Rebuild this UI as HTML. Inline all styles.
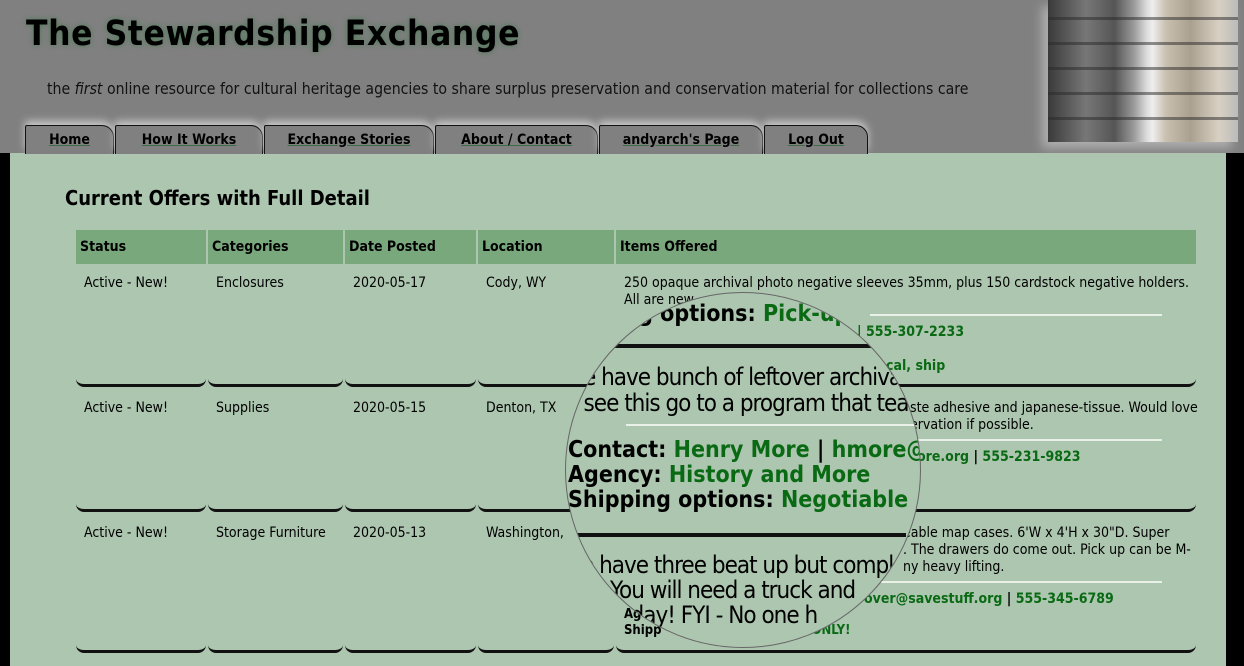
<!DOCTYPE html>
<html><head><meta charset="utf-8"><style>
*{margin:0;padding:0;box-sizing:border-box}
body{width:1244px;height:666px;overflow:hidden;background:#adc6b0;font-family:"DejaVu Sans Condensed","Liberation Sans",sans-serif;position:relative;color:#000}
#hdr{position:absolute;left:0;top:0;width:1244px;height:153px;background:#808080}
h1{position:absolute;left:26px;top:14px;font-size:35px;font-weight:bold;text-shadow:0 0 6px #4a7a55;letter-spacing:0.6px}
.tag{position:absolute;left:47px;top:79px;font-size:15.7px;color:#111}
.tab{position:absolute;top:125px;height:29px;background:#808080;border:1.5px solid #111;border-bottom:none;border-top-right-radius:12px;border-top-left-radius:2px;font-weight:bold;font-size:14px;text-align:center;padding-top:6px;box-shadow:0 -4px 8px #c8c8c8}
.tab span{text-decoration:underline;text-decoration-color:#3d6b45}
#img{position:absolute;left:1048px;top:0;width:190px;height:142px;background:
repeating-linear-gradient(0deg,rgba(0,0,0,0) 0 22px,rgba(40,40,40,.5) 22px 25px),
linear-gradient(90deg,#3a3a3a 0%,#777 20%,#555 35%,#999 45%,#dcdcdc 52%,#eee 55%,#c9c0b0 62%,#a9a090 75%,#d8d0c2 90%,#bbb 100%);box-shadow:-6px 6px 10px #b0b0b0}
.lb{position:absolute;left:0;top:153px;width:10px;height:513px;background:#000}
.rb{position:absolute;left:1226px;top:153px;width:18px;height:513px;background:#000}
h2{position:absolute;left:65px;top:186px;font-size:20px;font-weight:bold}
.th{position:absolute;top:230px;height:34px;background:#7aa87d;font-weight:bold;font-size:14px;padding:9px 0 0 4px}
.c{position:absolute;font-size:14px}
.bot{position:absolute;height:8px;border-bottom:3px solid #111;border-radius:0 0 8px 8px}
.g{color:#0a6a14;font-weight:bold}
.hl{position:absolute;left:870px;width:292px;height:2px;background:#e8f0e8}
#mag{position:absolute;left:565px;top:292px;width:356px;height:356px;border-radius:50%;overflow:hidden;border:1.5px solid #666;background:#adc6b0}
#mag div{position:absolute;white-space:nowrap}
.mb{font-size:23px;font-weight:bold}
.mn{font-size:24px;letter-spacing:-1px}
</style></head><body>
<div id="hdr"></div>
<h1>The Stewardship Exchange</h1>
<div class="tag">the <i>first</i> online resource for cultural heritage agencies to share surplus preservation and conservation material for collections care</div>
<div class="tab" style="left:25px;width:89px"><span>Home</span></div>
<div class="tab" style="left:115px;width:148px"><span>How It Works</span></div>
<div class="tab" style="left:264px;width:170px"><span>Exchange Stories</span></div>
<div class="tab" style="left:435px;width:163px"><span>About / Contact</span></div>
<div class="tab" style="left:599px;width:164px"><span>andyarch's Page</span></div>
<div class="tab" style="left:764px;width:104px"><span>Log Out</span></div>
<div id="img"></div>
<div class="lb"></div><div class="rb"></div>
<h2>Current Offers with Full Detail</h2>
<div class="th" style="left:76px;width:130px">Status</div>
<div class="th" style="left:208px;width:135px">Categories</div>
<div class="th" style="left:345px;width:131px">Date Posted</div>
<div class="th" style="left:478px;width:136px">Location</div>
<div class="th" style="left:616px;width:580px">Items Offered</div>

<div class="c" style="left:84px;top:275px">Active - New!</div>
<div class="c" style="left:216px;top:275px">Enclosures</div>
<div class="c" style="left:353px;top:275px">2020-05-17</div>
<div class="c" style="left:486px;top:275px">Cody, WY</div>
<div class="c" style="left:624px;top:275px;width:570px;line-height:17px">250 opaque archival photo negative sleeves 35mm, plus 150 cardstock negative holders. All are new</div>
<div class="hl" style="top:314px"></div>
<div class="c g" style="left:857px;top:324px">| <span>555-307-2233</span></div>
<div class="c g" style="left:886px;top:358px">cal, ship</div>

<div class="c" style="left:84px;top:400px">Active - New!</div>
<div class="c" style="left:216px;top:400px">Supplies</div>
<div class="c" style="left:353px;top:400px">2020-05-15</div>
<div class="c" style="left:486px;top:400px">Denton, TX</div>
<div class="c" style="left:910px;top:400px;line-height:17px">ste adhesive and japanese-tissue. Would love<br>ervation if possible.</div>
<div class="hl" style="top:439px"></div>
<div class="c g" style="left:908px;top:449px">hore.org <span style="color:#000">|</span> 555-231-9823</div>

<div class="c" style="left:84px;top:525px">Active - New!</div>
<div class="c" style="left:216px;top:525px">Storage Furniture</div>
<div class="c" style="left:353px;top:525px">2020-05-13</div>
<div class="c" style="left:486px;top:525px">Washington,</div>
<div class="c" style="left:903px;top:525px;line-height:17px">eable map cases. 6'W x 4'H x 30"D. Super<br>. The drawers do come out. Pick up can be M-<br>ny heavy lifting.</div>
<div class="hl" style="top:581px"></div>
<div class="c g" style="left:864px;top:591px">over@savestuff.org <span style="color:#000">|</span> 555-345-6789</div>
<div class="c" style="left:624px;top:607px;font-weight:bold;font-size:13px;line-height:16px">Ag<br>Shipp<span class="g" style="margin-left:150px">ONLY!</span></div>

<div class="bot" style="left:76px;top:379px;width:130px"></div>
<div class="bot" style="left:208px;top:379px;width:135px"></div>
<div class="bot" style="left:345px;top:379px;width:131px"></div>
<div class="bot" style="left:478px;top:379px;width:136px"></div>
<div class="bot" style="left:616px;top:379px;width:580px"></div>
<div class="bot" style="left:76px;top:504px;width:130px"></div>
<div class="bot" style="left:208px;top:504px;width:135px"></div>
<div class="bot" style="left:345px;top:504px;width:131px"></div>
<div class="bot" style="left:478px;top:504px;width:136px"></div>
<div class="bot" style="left:616px;top:504px;width:580px"></div>
<div class="bot" style="left:76px;top:645px;width:130px"></div>
<div class="bot" style="left:208px;top:645px;width:135px"></div>
<div class="bot" style="left:345px;top:645px;width:131px"></div>
<div class="bot" style="left:478px;top:645px;width:136px"></div>
<div class="bot" style="left:616px;top:645px;width:580px"></div>

<div id="mag">
<div class="mb" style="left:-16px;top:8px">Shipping options: <span class="g">Pick-up</span></div>
<div style="left:0;top:51px;width:310px;height:4px;background:#111"></div>
<div class="mn" style="left:-2px;top:70px">We have bunch of leftover archival</div>
<div class="mn" style="left:-8px;top:96px">to see this go to a program that tea</div>
<div style="left:60px;top:131px;width:300px;height:2px;background:#e8f0e8"></div>
<div class="mb" style="left:2px;top:144px">Contact: <span class="g">Henry More</span> | <span class="g">hmore@h</span></div>
<div class="mb" style="left:2px;top:169px">Agency: <span class="g">History and More</span></div>
<div class="mb" style="left:2px;top:194px">Shipping options: <span class="g">Negotiable</span></div>
<div style="left:0;top:240px;width:340px;height:4px;background:#111"></div>
<div class="mn" style="left:-4px;top:258px">We have three beat up but complete</div>
<div class="mn" style="left:-25px;top:283px">heavy. You will need a truck and</div>
<div class="mn" style="left:12px;top:308px">Saturday! FYI - No one h</div>
</div>
</body></html>
